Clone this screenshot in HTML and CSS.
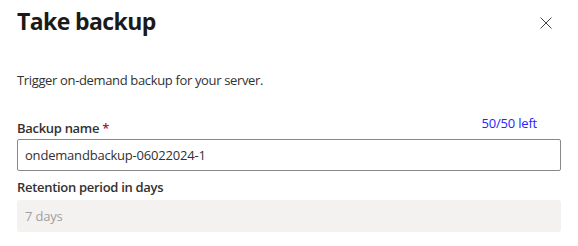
FILE: index.html
```html
<!DOCTYPE html>
<html lang="en">
<head>
    <meta charset="UTF-8">
    <meta name="viewport" content="width=device-width, initial-scale=1.0">
    <title>Take backup</title>
    <link rel="stylesheet" href="styles.css">
</head>
<body>
    <div class="panel">
        <div class="panel-header">
            <h1>Take backup</h1>
            <button class="close-btn" type="button" aria-label="Close">
                <svg width="12" height="12" viewBox="0 0 12 12">
                    <path d="M0.5 0.5 L11.5 11.5 M11.5 0.5 L0.5 11.5" stroke="#444" stroke-width="1" fill="none"/>
                </svg>
            </button>
        </div>

        <p class="description">Trigger on-demand backup for your server.</p>

        <div class="field">
            <div class="field-top">
                <label for="backup_name">Backup name <span class="required">*</span></label>
                <span class="counter">50/50 left</span>
            </div>
            <input type="text" id="backup_name" name="backup_name" value="ondemandbackup-06022024-1">
        </div>

        <div class="field">
            <label for="retention">Retention period in days</label>
            <input type="text" id="retention" name="retention" value="7 days" disabled>
        </div>
    </div>
</body>
</html>
```

FILE: styles.css
```css
body {
    margin: 0;
    font-family: 'Open Sans', 'Noto Sans', Arial, sans-serif;
    background-color: #ffffff;
    color: #323130;
}
.panel {
    padding: 0 17px;
}
.panel-header {
    display: flex;
    justify-content: space-between;
    align-items: flex-start;
    height: 50px;
}
h1 {
    margin: 5px 0 0 0;
    font-size: 23px;
    font-weight: 700;
    color: #1b1a19;
    letter-spacing: -0.6px;
}
.close-btn {
    background: none;
    border: none;
    padding: 0;
    margin: 17px 9px 0 0;
    cursor: pointer;
    width: 12px;
    height: 12px;
    display: flex;
}
.description {
    margin: 20px 0 0 0;
    font-size: 13px;
    line-height: 20px;
    letter-spacing: -0.35px;
}
.field {
    margin-top: 8px;
}
.field + .field {
    margin-top: 6px;
}
.field-top {
    display: flex;
    justify-content: space-between;
    margin-top: 23px;
}
.field-top label {
    margin-top: 5px;
}
label {
    display: block;
    font-size: 13px;
    font-weight: 600;
    line-height: 20px;
    letter-spacing: -0.3px;
    color: #323130;
}
.required {
    color: #a4262c;
}
.counter {
    font-size: 13px;
    line-height: 20px;
    letter-spacing: -0.2px;
    color: #2424ff;
    margin-right: 24px;
}
input[type="text"] {
    display: block;
    box-sizing: border-box;
    width: 100%;
    height: 32px;
    margin-top: 1px;
    padding: 0 7px;
    font-family: inherit;
    font-size: 13px;
    letter-spacing: -0.2px;
    color: #323130;
    border: 1px solid #8a8886;
    border-radius: 2px;
    background-color: #ffffff;
}
input[disabled] {
    margin-top: 3px;
    background-color: #f3f2f1;
    border-color: #f3f2f1;
    color: #a19f9d;
}
```
